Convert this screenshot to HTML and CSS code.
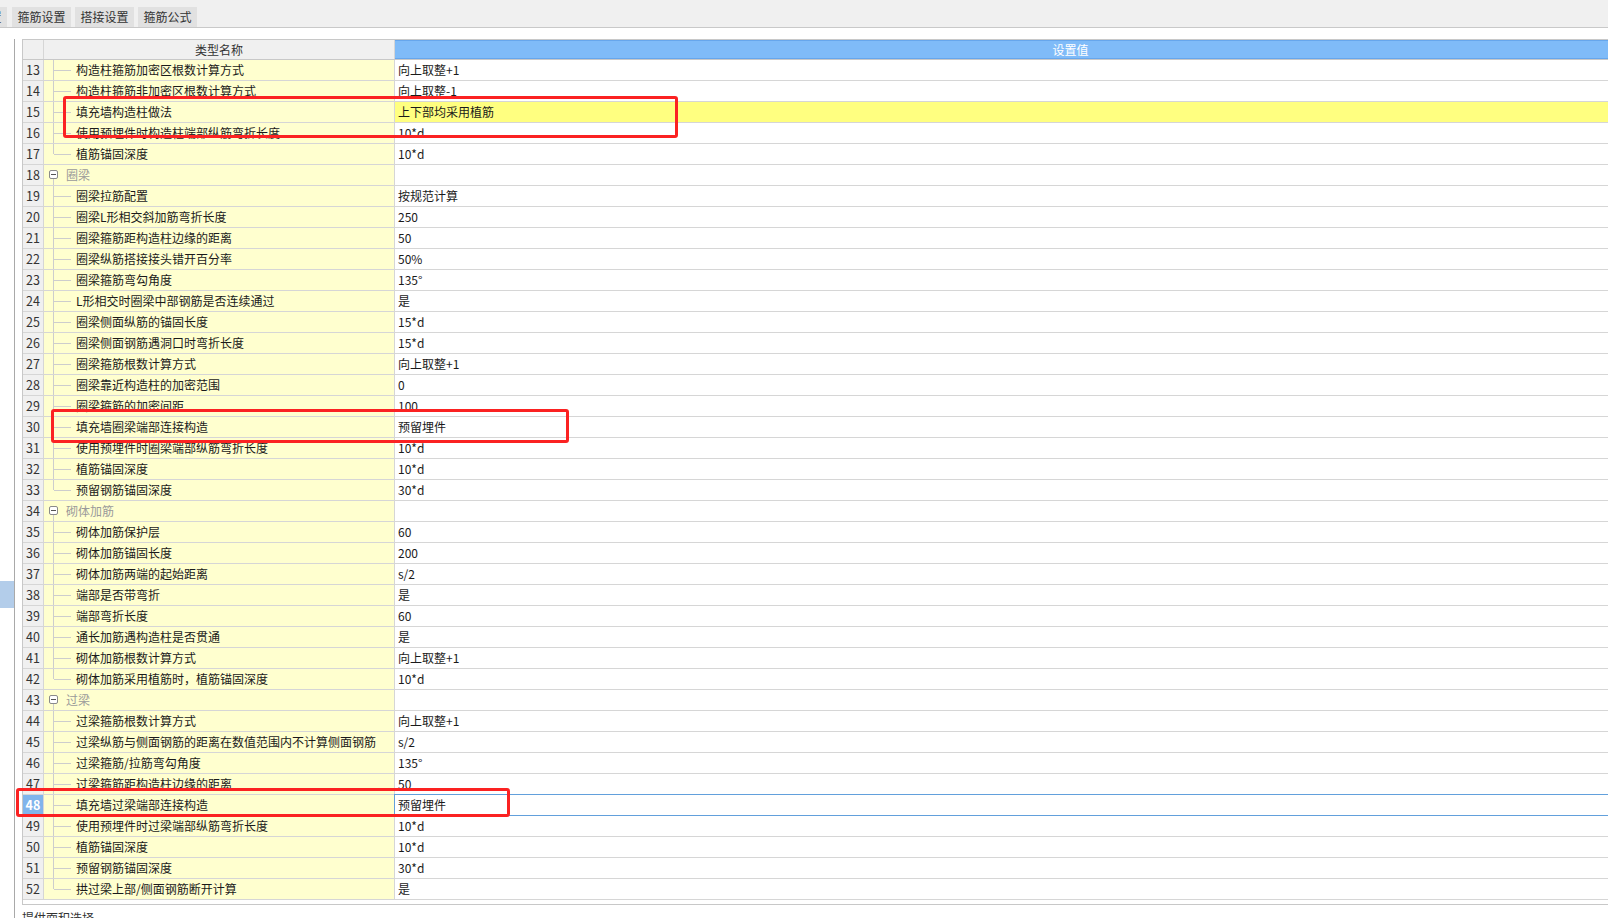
FILE: index.html
```html
<!DOCTYPE html>
<html lang="zh">
<head>
<meta charset="utf-8">
<title>钢筋设置</title>
<link rel="stylesheet" href="styles.css">
</head>
<body>
<div class="tabs">
  <div class="tab tab-cut">计算设置</div>
  <div class="tab">箍筋设置</div>
  <div class="tab">搭接设置</div>
  <div class="tab">箍筋公式</div>
</div>
<div class="main">
  <div class="side"><div class="side-sel"></div></div>
  <div class="content">
    <div class="gridbox">
      <div class="row head"><div class="num"></div><div class="name">类型名称</div><div class="val">设置值</div></div>
      <div class="row"><div class="num">13</div><div class="name child"><span class="tree"></span>构造柱箍筋加密区根数计算方式</div><div class="val">向上取整+1</div></div>
      <div class="row"><div class="num">14</div><div class="name child"><span class="tree"></span>构造柱箍筋非加密区根数计算方式</div><div class="val">向上取整-1</div></div>
      <div class="row"><div class="num">15</div><div class="name child"><span class="tree"></span>填充墙构造柱做法</div><div class="val hl">上下部均采用植筋</div></div>
      <div class="row"><div class="num">16</div><div class="name child"><span class="tree"></span>使用预埋件时构造柱端部纵筋弯折长度</div><div class="val">10*d</div></div>
      <div class="row"><div class="num">17</div><div class="name child"><span class="tree last"></span>植筋锚固深度</div><div class="val">10*d</div></div>
      <div class="row"><div class="num">18</div><div class="name group"><span class="minus"></span>圈梁</div><div class="val"></div></div>
      <div class="row"><div class="num">19</div><div class="name child"><span class="tree"></span>圈梁拉筋配置</div><div class="val">按规范计算</div></div>
      <div class="row"><div class="num">20</div><div class="name child"><span class="tree"></span>圈梁L形相交斜加筋弯折长度</div><div class="val">250</div></div>
      <div class="row"><div class="num">21</div><div class="name child"><span class="tree"></span>圈梁箍筋距构造柱边缘的距离</div><div class="val">50</div></div>
      <div class="row"><div class="num">22</div><div class="name child"><span class="tree"></span>圈梁纵筋搭接接头错开百分率</div><div class="val">50%</div></div>
      <div class="row"><div class="num">23</div><div class="name child"><span class="tree"></span>圈梁箍筋弯勾角度</div><div class="val">135°</div></div>
      <div class="row"><div class="num">24</div><div class="name child"><span class="tree"></span>L形相交时圈梁中部钢筋是否连续通过</div><div class="val">是</div></div>
      <div class="row"><div class="num">25</div><div class="name child"><span class="tree"></span>圈梁侧面纵筋的锚固长度</div><div class="val">15*d</div></div>
      <div class="row"><div class="num">26</div><div class="name child"><span class="tree"></span>圈梁侧面钢筋遇洞口时弯折长度</div><div class="val">15*d</div></div>
      <div class="row"><div class="num">27</div><div class="name child"><span class="tree"></span>圈梁箍筋根数计算方式</div><div class="val">向上取整+1</div></div>
      <div class="row"><div class="num">28</div><div class="name child"><span class="tree"></span>圈梁靠近构造柱的加密范围</div><div class="val">0</div></div>
      <div class="row"><div class="num">29</div><div class="name child"><span class="tree"></span>圈梁箍筋的加密间距</div><div class="val">100</div></div>
      <div class="row"><div class="num">30</div><div class="name child"><span class="tree"></span>填充墙圈梁端部连接构造</div><div class="val">预留埋件</div></div>
      <div class="row"><div class="num">31</div><div class="name child"><span class="tree"></span>使用预埋件时圈梁端部纵筋弯折长度</div><div class="val">10*d</div></div>
      <div class="row"><div class="num">32</div><div class="name child"><span class="tree"></span>植筋锚固深度</div><div class="val">10*d</div></div>
      <div class="row"><div class="num">33</div><div class="name child"><span class="tree last"></span>预留钢筋锚固深度</div><div class="val">30*d</div></div>
      <div class="row"><div class="num">34</div><div class="name group"><span class="minus"></span>砌体加筋</div><div class="val"></div></div>
      <div class="row"><div class="num">35</div><div class="name child"><span class="tree"></span>砌体加筋保护层</div><div class="val">60</div></div>
      <div class="row"><div class="num">36</div><div class="name child"><span class="tree"></span>砌体加筋锚固长度</div><div class="val">200</div></div>
      <div class="row"><div class="num">37</div><div class="name child"><span class="tree"></span>砌体加筋两端的起始距离</div><div class="val">s/2</div></div>
      <div class="row"><div class="num">38</div><div class="name child"><span class="tree"></span>端部是否带弯折</div><div class="val">是</div></div>
      <div class="row"><div class="num">39</div><div class="name child"><span class="tree"></span>端部弯折长度</div><div class="val">60</div></div>
      <div class="row"><div class="num">40</div><div class="name child"><span class="tree"></span>通长加筋遇构造柱是否贯通</div><div class="val">是</div></div>
      <div class="row"><div class="num">41</div><div class="name child"><span class="tree"></span>砌体加筋根数计算方式</div><div class="val">向上取整+1</div></div>
      <div class="row"><div class="num">42</div><div class="name child"><span class="tree last"></span>砌体加筋采用植筋时，植筋锚固深度</div><div class="val">10*d</div></div>
      <div class="row"><div class="num">43</div><div class="name group"><span class="minus"></span>过梁</div><div class="val"></div></div>
      <div class="row"><div class="num">44</div><div class="name child"><span class="tree"></span>过梁箍筋根数计算方式</div><div class="val">向上取整+1</div></div>
      <div class="row"><div class="num">45</div><div class="name child"><span class="tree"></span>过梁纵筋与侧面钢筋的距离在数值范围内不计算侧面钢筋</div><div class="val">s/2</div></div>
      <div class="row"><div class="num">46</div><div class="name child"><span class="tree"></span>过梁箍筋/拉筋弯勾角度</div><div class="val">135°</div></div>
      <div class="row"><div class="num">47</div><div class="name child"><span class="tree"></span>过梁箍筋距构造柱边缘的距离</div><div class="val">50</div></div>
      <div class="row"><div class="num sel">48</div><div class="name child"><span class="tree"></span>填充墙过梁端部连接构造</div><div class="val edit">预留埋件</div></div>
      <div class="row"><div class="num">49</div><div class="name child"><span class="tree"></span>使用预埋件时过梁端部纵筋弯折长度</div><div class="val">10*d</div></div>
      <div class="row"><div class="num">50</div><div class="name child"><span class="tree"></span>植筋锚固深度</div><div class="val">10*d</div></div>
      <div class="row"><div class="num">51</div><div class="name child"><span class="tree"></span>预留钢筋锚固深度</div><div class="val">30*d</div></div>
      <div class="row"><div class="num">52</div><div class="name child"><span class="tree last"></span>拱过梁上部/侧面钢筋断开计算</div><div class="val">是</div></div>
    </div>
    <div class="footer-text">提供面积选择</div>
  </div>
</div>
<div class="mark mark1"></div>
<div class="mark mark2"></div>
<div class="mark mark3"></div>
</body>
</html>
```

FILE: styles.css
```css
html, body {
  margin: 0;
  padding: 0;
}
body {
  width: 1608px;
  height: 918px;
  overflow: hidden;
  background: #ffffff;
  font-family: "Noto Sans CJK SC", "Microsoft YaHei", sans-serif;
  font-size: 12px;
  color: #1a1a1a;
  position: relative;
}

/* top tab strip */
.tabs {
  height: 27px;
  background: #f0f0f0;
  border-bottom: 1px solid #c9c9c9;
  display: flex;
  align-items: flex-end;
  gap: 4px;
  overflow: hidden;
}
.tab {
  height: 20px;
  line-height: 20px;
  width: 59px;
  text-align: center;
  background: #e1e1e1;
  color: #333;
  font-size: 12px;
}
.tab-cut {
  margin-left: -52px;
  margin-right: 1px;
}

/* main area */
.main {
  display: flex;
  height: 890px;
}
.side {
  width: 15px;
  margin-top: 11px;
  border-right: 1px solid #a9a9a9;
  padding-top: 542px;
  box-sizing: border-box;
  flex: none;
}
.side-sel {
  width: 14px;
  height: 27px;
  background: #b3cdea;
}
.content {
  flex: 1;
  margin-left: 7px;
  margin-top: 11px;
  min-width: 0;
}
.gridbox {
  border-left: 1px solid #c8c8c8;
  border-bottom: 1px solid #c8c8c8;
  height: 866px;
  box-sizing: border-box;
  overflow: hidden;
}

/* rows */
.row {
  display: flex;
  height: 21px;
  box-sizing: border-box;
  border-bottom: 1px solid #d6d6d6;
  line-height: 20px;
  white-space: nowrap;
}
.num {
  width: 21px;
  flex: none;
  box-sizing: border-box;
  border-right: 1px solid #d6d6d6;
  background: #f0f0f0;
  color: #333;
  text-align: center;
  font-size: 12.5px;
}
.num.sel {
  background: #80b4ec;
  color: #ffffff;
  font-weight: bold;
}
.name {
  width: 351px;
  flex: none;
  box-sizing: border-box;
  border-right: 1px solid #d6d6d6;
  background: #ffffcf;
  position: relative;
  overflow: hidden;
}
.val {
  flex: 1;
  padding-left: 3px;
  background: #ffffff;
}
.val.hl {
  background: #ffff80;
}
.val.edit {
  outline: 1px solid #62a0dc;
  position: relative;
}

/* header */
.row.head {
  height: 21px;
  border-top: 1px solid #c8c8c8;
  border-bottom: 1px solid #c8c8c8;
  line-height: 19px;
}
.head .name {
  background: #f0f0f0;
  text-align: center;
  color: #333;
}
.head .val {
  background: #7fbbf8;
  color: #ffffff;
  text-align: center;
  padding-left: 138px;
  box-shadow: inset 0 1px 0 #66a6ec, inset 0 -1px 0 #66a6ec;
}

/* tree */
.name.child {
  padding-left: 32px;
}
.tree {
  position: absolute;
  left: 9px;
  top: 0;
  bottom: -1px;
  width: 17px;
  border-left: 1px solid #cdcdcd;
}
.tree.last {
  bottom: 10px;
}
.tree::after {
  content: "";
  position: absolute;
  left: 0;
  top: 10px;
  width: 17px;
  border-top: 1px solid #cdcdcd;
}
.name.group {
  padding-left: 22px;
  color: #9a9a9a;
}
.minus {
  position: absolute;
  left: 5px;
  top: 5px;
  width: 7px;
  height: 7px;
  border: 1px solid #8a8a8a;
  border-radius: 2px;
  background: #ffffff;
}
.minus::before {
  content: "";
  position: absolute;
  left: 1px;
  right: 1px;
  top: 3px;
  border-top: 1px solid #555;
}
.name.group::after {
  content: "";
  position: absolute;
  left: 9px;
  top: 14px;
  bottom: -1px;
  border-left: 1px solid #cdcdcd;
}

.footer-text {
  margin-top: 4px;
  line-height: 18px;
  color: #333;
}

/* red annotation boxes */
.mark {
  position: absolute;
  border: 3px solid #fb2222;
  border-radius: 3px;
  box-sizing: border-box;
}
.mark1 { left: 63px; top: 96px; width: 615px; height: 42px; }
.mark2 { left: 51px; top: 409px; width: 518px; height: 34px; }
.mark3 { left: 16px; top: 788px; width: 494px; height: 29px; }
```
